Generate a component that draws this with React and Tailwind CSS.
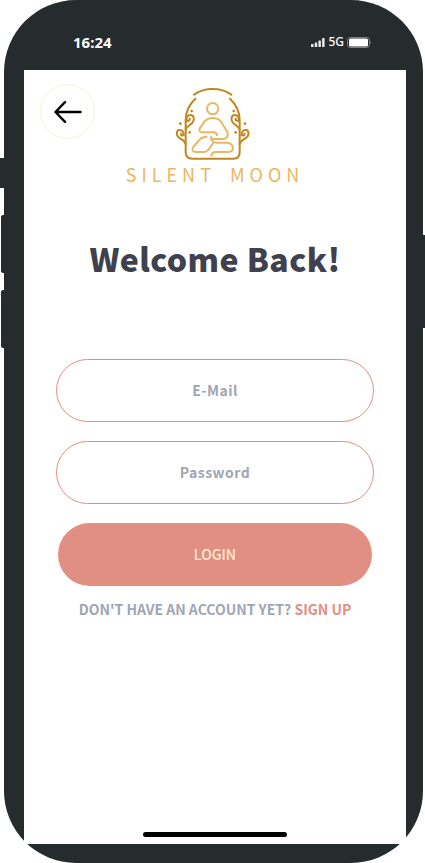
function Leaves() {
  return (
    <g>
      <path d="M62 148 C66 138 76 136 83 127 C90 117 86 105 77 105 C68 105 63 111 64 124 M66 121 C71 124 76 120 74 116" />
      <path d="M62 192 C60 182 52 180 42 173 C32 165 34 151 43 150 C52 149 57 156 56 166 M56 165 C51 169 46 165 48 161" />
      <g fill="#c1871f" stroke="none">
        <circle cx="80" cy="93" r="4" />
        <circle cx="46" cy="131" r="4" />
        <circle cx="74" cy="157" r="4" />
      </g>
    </g>
  );
}

function Logo() {
  return (
    <svg
      className="h-[73px] w-[75px]"
      viewBox="30 21 225 219"
      fill="none"
      strokeWidth="6"
      strokeLinecap="round"
      strokeLinejoin="round"
      aria-hidden="true"
    >
      <g stroke="#c1871f">
        <path d="M87 44 Q111 27 143 27 Q175 27 199 44" />
        <path d="M91 56 C70 76 62 95 62 120 V216 Q62 236 82 236 H206 Q224 236 224 216 V120 C224 95 216 76 195 56" />
        <Leaves />
        <g transform="translate(286 0) scale(-1 1)">
          <Leaves />
        </g>
      </g>
      <g stroke="#e9b862">
        <circle cx="143" cy="86" r="17" />
        <path d="M156 166 Q155 157 145 157 H112 Q101 156 104 146 L118 125 Q128 114 142 114 Q160 114 168 125 L187 155 Q192 175 176 177 H138" />
        <path d="M125 170 Q110 171 103 180 L84 202 Q78 215 91 216 H118 Q126 216 131 208 L147 186 M138 171 Q139 188 156 188 H186 Q203 190 204 203 Q204 215 190 216 H154 Q140 216 139 227" />
      </g>
    </svg>
  );
}

function StatusBar() {
  return (
    <header className="flex h-[70px] items-start justify-between pt-8 pr-[34px] pl-[49px] text-white">
      <span className="font-['Noto_Sans',sans-serif] text-[15px] leading-5 font-bold">16:24</span>
      <div className="flex h-5 items-center gap-[3px]">
        <svg className="h-[9px] w-[14px]" viewBox="0 0 14 9" fill="#e8e9ea" aria-hidden="true">
          <rect x="0" y="6" width="2.5" height="3" rx=".6" />
          <rect x="3.7" y="4.5" width="2.5" height="4.5" rx=".6" />
          <rect x="7.4" y="2.5" width="2.5" height="6.5" rx=".6" />
          <rect x="11.1" y="0" width="2.5" height="9" rx=".6" />
        </svg>
        <span className="font-['Noto_Sans',sans-serif] text-xs leading-5 font-medium">5G</span>
        <svg className="h-[11px] w-[25px]" viewBox="0 0 25 11" aria-hidden="true">
          <rect x=".5" y=".5" width="22" height="10" rx="2.8" fill="none" stroke="#7c8083" />
          <rect x="2" y="1.5" width="19" height="8" rx="1.5" fill="#fff" />
          <path d="M23.5 3.7 Q25 5.5 23.5 7.3Z" fill="#7c8083" />
        </svg>
      </div>
    </header>
  );
}

function Field({ type, label }) {
  return (
    <input
      type={type}
      aria-label={label}
      placeholder={label}
      className="block h-[63px] w-full rounded-full border border-[#e28f83] bg-white pb-0.5 text-center text-sm font-bold tracking-[0.5px] text-[#3f414e] outline-none placeholder:text-[#a1a4b2]"
    />
  );
}

export default function App() {
  return (
    <div className="min-h-screen bg-white pr-[2px] pl-1 font-['Noto_Sans_CJK_SC',sans-serif]">
      <div className="relative flex min-h-screen flex-col rounded-[72px] bg-[#262b2e] pr-[17px] pb-[19px] pl-5">
        <div className="absolute top-[158px] -left-1 h-[30px] w-2 bg-[#262b2e]" />
        <div className="absolute top-[215px] -left-[3px] h-[58px] w-2 rounded-l-xs bg-[#262b2e]" />
        <div className="absolute top-[290px] -left-[3px] h-[58px] w-2 rounded-l-xs bg-[#262b2e]" />
        <div className="absolute top-[235px] -right-[2px] h-[93px] w-2 bg-[#262b2e]" />
        <StatusBar />
        <main className="relative flex flex-1 flex-col items-center bg-white px-8 pt-[17px]">
          <button
            type="button"
            aria-label="Back"
            className="absolute top-[14px] left-4 flex size-[55px] items-center justify-center rounded-full border border-[#faf0dc]"
          >
            <svg className="h-[22px] w-7" viewBox="0 0 28 22" fill="none" stroke="#000" strokeWidth="2.4" strokeLinecap="round" strokeLinejoin="round" aria-hidden="true">
              <path d="M26.5 11 H1.5 M11 1.2 L1.5 11 L11 20.8" />
            </svg>
          </button>
          <div className="flex flex-col items-center pr-[5px]">
            <Logo />
            <p className="mt-[2px] flex gap-[14px] pl-[5px] text-lg leading-6 font-normal tracking-[5px] whitespace-nowrap text-[#e9b862]">
              <span>SILENT</span> <span>MOON</span>
            </p>
          </div>
          <h1 className="mt-12 text-[32px] leading-[48px] font-black tracking-[0.4px] whitespace-nowrap text-[#3f414e]">
            Welcome Back!
          </h1>
          <form className="mt-[77px] flex w-full flex-col gap-[19px]" onSubmit={(event) => event.preventDefault()}>
            <Field type="email" label="E-Mail" />
            <Field type="password" label="Password" />
            <div className="px-0.5">
              <button type="submit" className="block h-[63px] w-full rounded-full bg-[#e28f83] pb-0.5 text-sm font-medium text-[#feebcf]">
                LOGIN
              </button>
            </div>
          </form>
          <p className="mt-[11px] text-sm leading-6 font-bold whitespace-nowrap text-[#a1a4b2]">
            DON'T HAVE AN ACCOUNT YET?{" "}
            <a href="#signup" className="text-[#e28f83]">SIGN UP</a>
          </p>
          <div className="mt-auto mb-[7px] h-[5px] w-36 rounded-full bg-black" />
        </main>
      </div>
    </div>
  );
}
